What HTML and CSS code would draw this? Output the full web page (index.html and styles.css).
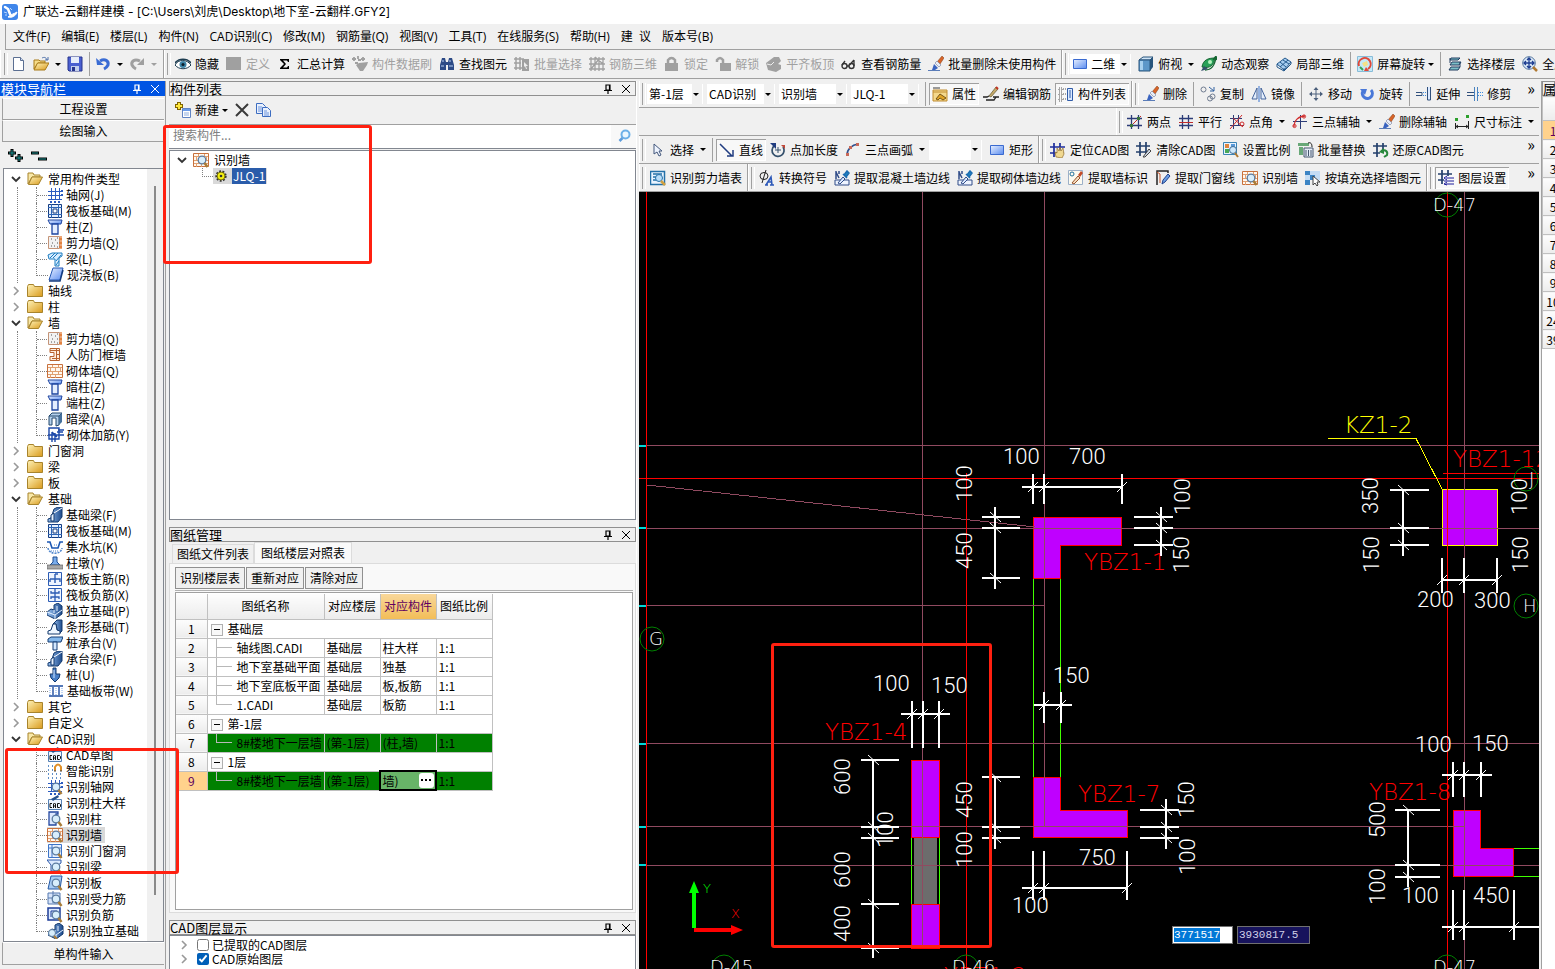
FILE: index.html
```html
<!DOCTYPE html>
<html lang="zh-CN">
<head>
    <meta charset="UTF-8">
    <meta name="viewport" content="width=device-width, initial-scale=1.0">
    <title>广联达-云翻样建模</title>
    <link rel="stylesheet" href="styles.css">
</head>
<body>
    <!-- 图标库 -->
    <svg class="sprite" aria-hidden="true">
        <defs>
            <linearGradient id="g-folder" x1="0" y1="0" x2="1" y2="1"><stop offset="0" stop-color="#fff3b8"/><stop offset="1" stop-color="#d99a1c"/></linearGradient>
            <linearGradient id="g-blue" x1="0" y1="0" x2="1" y2="1"><stop offset="0" stop-color="#e8f0ff"/><stop offset="1" stop-color="#5a8cf0"/></linearGradient>
            <linearGradient id="g-steel" x1="0" y1="0" x2="1" y2="0"><stop offset="0" stop-color="#9cc4f4"/><stop offset="1" stop-color="#1c4a8c"/></linearGradient>
        </defs>
        <symbol id="i-logo" viewBox="0 0 16 16"><rect width="16" height="16" rx="3" fill="#3f86ea"/><path d="M3 3l3 2 2 5" stroke="#fff" stroke-width="2.500" fill="none" stroke-linecap="round"/><path d="M6 13c4 1 8-1 9-5-3 2-6 2-9 5z" fill="#fff" stroke="#fff"/><path d="M2 8l3 1M3 11l2 0M8 4l2 2" stroke="#bcd9ff"/></symbol>
        <symbol id="i-new" viewBox="0 0 16 16"><path d="M2.500 1.500h7l3 3v10h-10z" fill="#fff" stroke="#5b6f92"/><path d="M9.500 1.500v3h3" fill="#cfdcf2" stroke="#5b6f92"/></symbol>
        <symbol id="i-open" viewBox="0 0 16 16"><path d="M1 13V4h5l1 1h5v2H5z" fill="#f6dc88" stroke="#a87a18"/><path d="M1 14l3.500-7H16l-4 7z" fill="url(#g-folder)" stroke="#a87a18"/><path d="M9 2c2-1 4-1 5 2M12 4h3V1" fill="none" stroke="#4c6fa8"/></symbol>
        <symbol id="i-save" viewBox="0 0 16 16"><path d="M1 1h14v14H2l-1-1z" fill="#4a5fd0" stroke="#26348c"/><path d="M4 1h8v6H4z" fill="#e6ecfa"/><path d="M4 10h8v5H4z" fill="#c4cfec"/><path d="M5 11h3v4H5z" fill="#26348c"/></symbol>
        <symbol id="i-undo" viewBox="0 0 16 16"><path d="M5 5c5-3 9 0 8 4-1 2-2 3-4 4" fill="none" stroke="#3a6cd4" stroke-width="3"/><path d="M1 2l8 7H2z" fill="#3a6cd4"/></symbol>
        <symbol id="i-redo" viewBox="0 0 16 16"><path d="M11 5C5 2 2 6 3 9c1 2 2 3 4 4" fill="none" stroke="#a0a0a0" stroke-width="3"/><path d="M15 2v7H8z" fill="#a0a0a0"/></symbol>
        <symbol id="i-eye" viewBox="0 0 16 16"><path d="M0 9c3-6 12-6 16 0-4 5-12 5-16 0z" fill="#fff" stroke="#1d3c50"/><path d="M0 7C4 2 12 2 16 7" fill="none" stroke="#1d3c50" stroke-width="1.500"/><circle cx="8" cy="8.500" r="3.500" fill="#3c83a6"/><circle cx="8" cy="8.500" r="1.500" fill="#0c1c28"/></symbol>
        <symbol id="i-block" viewBox="0 0 16 16"><path d="M0 1h15v13H0z" fill="#a0a0a0"/></symbol>
        <symbol id="i-sum" viewBox="0 0 16 16"><path d="M3 3h9v3h-1l-1-1.500H6l3 3.500-3 3.500h4l1-1.500h1v3H3v-1l4-4-4-4z" fill="#000"/></symbol>
        <symbol id="i-brushgray" viewBox="0 0 16 16"><path d="M4 9l3-2 9-1-1 3-4 6H8z" fill="#a0a0a0"/><path d="M0 3h4M2 1v4M6 0v3M6 4h3M11 1v4M9 3h4M3 7h3" stroke="#a0a0a0" stroke-width="1.800"/></symbol>
        <symbol id="i-find" viewBox="0 0 16 16"><path d="M3 2h3l1 4v8H1V9zM10 2h3l2 7v5H9V6z" fill="#2c4a86"/><path d="M6 6h4v3H6z" fill="#2c4a86"/><path d="M2 10h3M10 10h4M4 4v2M11 4v2" stroke="#b9d0f4"/></symbol>
        <symbol id="i-batchsel" viewBox="0 0 16 16"><path d="M2 1v13M6 1v13M0 3h10M0 7h7M0 12h8" stroke="#a0a0a0" stroke-width="1.500"/><path d="M8 3h7v12H8z" fill="#a0a0a0"/><path d="M10 6l4 4h-2l1 3h-1l-1-3-1 1z" fill="#eee"/></symbol>
        <symbol id="i-rebar3d" viewBox="0 0 16 16"><path d="M2 15V1M6 15V1M10 15V1M14 1v14M0 3h16M0 8h16M0 13h16M6 1l8 7M2 13l8-10" stroke="#a0a0a0" stroke-width="1.300" fill="none"/></symbol>
        <symbol id="i-lock" viewBox="0 0 16 16"><path d="M1 7h13v8H1z" fill="#a0a0a0"/><path d="M4 8V4q3.500-4 7 0v4" stroke="#a0a0a0" stroke-width="2.500" fill="none"/></symbol>
        <symbol id="i-unlock" viewBox="0 0 16 16"><path d="M5 7h11v8H5z" fill="#a0a0a0"/><path d="M8 8V4Q5 0 2 4v2" stroke="#a0a0a0" stroke-width="2.500" fill="none"/></symbol>
        <symbol id="i-flush" viewBox="0 0 16 16"><path d="M0 7l4-3 4-3h5l2 4-3 3 3 1v4l-5 3-8-2z" fill="#a0a0a0"/><path d="M1 8l4 1 3-3" stroke="#eee" fill="none"/></symbol>
        <symbol id="i-glass" viewBox="0 0 16 16"><circle cx="3.500" cy="10" r="2.500" fill="none" stroke="#333" stroke-width="1.400"/><circle cx="10.500" cy="10" r="2.500" fill="none" stroke="#333" stroke-width="1.400"/><path d="M1 9l3-4M8.500 9L13 4M13 10V4M6 10h2" stroke="#333" fill="none" stroke-width="1.300"/></symbol>
        <symbol id="i-brush" viewBox="0 0 16 16"><path d="M9 6l5-6 2 2-4 6z" fill="#d86428" stroke="#7c3a14" stroke-width=".5"/><path d="M7 7l2-2 4 4-2 2z" fill="#e8ecf6" stroke="#707c9c" stroke-width=".6"/><path d="M6 8l4 4-3 2H4z" fill="#3a64c0"/><path d="M0 14.500h12" stroke="#5a7cb8"/></symbol>
        <symbol id="i-rect" viewBox="0 0 16 16"><path d="M1.500 3.500h13v9h-13z" fill="url(#g-blue)" stroke="#3a6ad0"/></symbol>
        <symbol id="i-cube" viewBox="0 0 16 16"><path d="M1 4l4-3h10l-3 3z" fill="#cfe4f6" stroke="#28557c"/><path d="M1 4h11v11H1z" fill="#5d97c8" stroke="#28557c"/><path d="M12 4l3-3v10l-3 4z" fill="#28557c"/><path d="M2 5h3v9H2z" fill="#a8d0ee"/></symbol>
        <symbol id="i-orbit" viewBox="0 0 16 16"><path d="M1 11c1-7 6-9 13-9-1 7-5 11-13 9z" fill="#28a058" stroke="#146430"/><path d="M4 14c7 0 10-5 11-13M12 4l3-4 1 4" stroke="#146430" fill="none" stroke-width="1.300"/><path d="M0 15l3-5 4 3z" fill="#34506c"/><circle cx="9" cy="6" r="2" fill="#b4f0bc"/></symbol>
        <symbol id="i-part3d" viewBox="0 0 16 16"><path d="M1 8l8-6 6 4-7 8z" fill="#a6cdf0" stroke="#24598c"/><path d="M4 6l6 5M7 4l6 4M4 11l8-7M1 8v3l7 4v-3M8 15l7-7V6" stroke="#24598c" fill="none"/></symbol>
        <symbol id="i-screenrot" viewBox="0 0 16 16"><path d="M.5.5h15v15H.5z" fill="#c4e8f8" stroke="#88bcd8"/><path d="M2 10a6 6 0 1 1 9 3" fill="none" stroke="#e04838" stroke-width="2"/><path d="M5 7l5-2 1 4-4 2z" fill="#f4e088"/><path d="M12 15H7l2-4z" fill="#e04838"/><path d="M3 11l3 3" stroke="#38a058" stroke-width="2"/></symbol>
        <symbol id="i-floors" viewBox="0 0 16 16"><path d="M4 2h9l-2 2H3zM5 6h9l-2 3H3zM4 11h9l-2 3H2z" fill="#7cc0c8" stroke="#203c60"/><path d="M3 2v5M13 6v5" stroke="#203c60"/></symbol>
        <symbol id="i-fullscr" viewBox="0 0 16 16"><circle cx="7" cy="7" r="6.300" fill="#dceaf8" stroke="#50719c"/><path d="M7 2v10M2 7h10M5 4l2-2 2 2M5 10l2 2 2-2M4 5L2 7l2 2M10 5l2 2-2 2" stroke="#1c3c90" fill="none" stroke-width="1.300"/><path d="M11 11l4 4" stroke="#b07830" stroke-width="2.500"/></symbol>
        <symbol id="i-newcomp" viewBox="0 0 16 16"><path d="M4 0v8M0 4h8" stroke="#806400" stroke-width="4"/><path d="M4 1v6M1 4h6" stroke="#ffe83c" stroke-width="2"/><path d="M7.500 6.500h8v9h-8z" fill="#fff" stroke="#6084c4"/><path d="M8 7h7v2H8z" fill="#6a9be8"/><path d="M9 11h5M9 13h5" stroke="#8faede"/></symbol>
        <symbol id="i-x" viewBox="0 0 16 16"><path d="M2 2l12 12M14 2L2 14" stroke="#3a3a3a" stroke-width="2"/></symbol>
        <symbol id="i-copy" viewBox="0 0 16 16"><path d="M.5 1.500h6l3 3v7h-9z" fill="#eaf1fd" stroke="#3c6cc0"/><path d="M6.500 5.500h5l3 3v6h-8z" fill="#eaf1fd" stroke="#3c6cc0"/><path d="M2 5h4M2 7h4M2 9h4M8 9h3M8 11h5M8 13h5" stroke="#6c94dc"/></symbol>
        <symbol id="i-search" viewBox="0 0 16 16"><circle cx="9.500" cy="6.500" r="4" fill="#eaf6ff" stroke="#6cb0e8" stroke-width="2"/><path d="M6.500 10l-3 3" stroke="#5c9cdc" stroke-width="2.500"/></symbol>
        <symbol id="i-attr" viewBox="0 0 16 16"><path d="M1 1h7v2H1z" fill="#999"/><path d="M1 4h14v11H1z" fill="#f4d88c" stroke="#c08c30"/><path d="M1 6h14" stroke="#c08c30"/><path d="M4 13l4-5 6 4-3 2-3-2-2 2z" fill="#e0a428" stroke="#5c3c08" stroke-width=".8"/></symbol>
        <symbol id="i-editbar" viewBox="0 0 16 16"><path d="M0 11h4l2-1M10 11h6M3 14h8l2-3" stroke="#222" fill="none" stroke-width="1.300"/><path d="M6 10l7-9 2 2-7 8z" fill="#c4a868" stroke="#5c5430" stroke-width=".7"/><path d="M13 1l2 2" stroke="#c03020" stroke-width="2"/></symbol>
        <symbol id="i-complist" viewBox="0 0 16 16"><path d="M1 2h3v3H1zM1 7h3v3H1zM1 12h3v3H1zM5 3h3M5 8h3M5 13h3" fill="none" stroke="#555" stroke-dasharray="1 1"/><path d="M9.500 2.500h5v12h-5z" fill="#dceaff" stroke="#305ca8"/><path d="M11 5h2M11 7h2M11 9h2M11 11h2" stroke="#305ca8"/></symbol>
        <symbol id="i-dup" viewBox="0 0 16 16"><circle cx="3.500" cy="3.500" r="2.500" fill="none" stroke="#707c90"/><circle cx="12.500" cy="10.500" r="2.500" fill="none" stroke="#707c90"/><circle cx="10" cy="12.500" r="2.500" fill="none" stroke="#707c90"/><path d="M9 1l5 4M14 1v4h-4" stroke="#3060a0" fill="none"/></symbol>
        <symbol id="i-mirror" viewBox="0 0 16 16"><path d="M6 2v11H1zM10 2v11h5z" fill="#e4eefc" stroke="#44649c"/><path d="M8 0v16" stroke="#3a74d0"/></symbol>
        <symbol id="i-move" viewBox="0 0 16 16"><path d="M8 2v12M2 8h12" stroke="#4c607c"/><path d="M8 1l2.500 3h-5zM8 15l2.500-3h-5zM1 8l3-2.500v5zM15 8l-3-2.500v5z" fill="#4c607c"/></symbol>
        <symbol id="i-rotate" viewBox="0 0 16 16"><path d="M12 4a5 5 0 1 1-8 1" fill="none" stroke="#4a78d8" stroke-width="3"/><path d="M1 3h7L6 9z" fill="#4a78d8"/></symbol>
        <symbol id="i-extend" viewBox="0 0 16 16"><path d="M0 6.500h6v3H0" fill="none" stroke="#30507c"/><path d="M7 6.500h3M7 9.500h3" stroke="#3a8ce0" stroke-dasharray="1 1"/><path d="M11.500 1v13h3V1" fill="#dceaff" stroke="#30507c"/></symbol>
        <symbol id="i-trim" viewBox="0 0 16 16"><path d="M0 6.500h7M0 9.500h7" stroke="#30507c"/><path d="M11 6.500h5M11 9.500h5" stroke="#3a8ce0" stroke-dasharray="1 1"/><path d="M7.500 1v14M10.500 1v14" stroke="#4a84c0"/></symbol>
        <symbol id="i-axis2" viewBox="0 0 16 16"><path d="M4.500 1v14M11.500 1v14M0 4.500h15M0 11.500h15" stroke="#2c3c78" stroke-width="1.300"/><path d="M3 13L14 2" stroke="#c02c2c"/><path d="M3 10h3v3H3zM10 3h3v3h-3z" fill="#387438"/></symbol>
        <symbol id="i-parallel" viewBox="0 0 16 16"><path d="M4.500 1v14M10.500 1v14M1 4.500h14M1 11.500h14" stroke="#2c3c78" stroke-width="1.300"/><path d="M1 8.500h14" stroke="#c02c2c"/></symbol>
        <symbol id="i-angle" viewBox="0 0 16 16"><path d="M4.500 1v14M9.500 1v11M1 4.500h12M1 11.500h14" stroke="#2c3c78"/><path d="M1 15L13 1M4 4l10 9" stroke="#d02c2c"/><circle cx="13" cy="10" r="2" fill="none" stroke="#d02c2c"/></symbol>
        <symbol id="i-axis3" viewBox="0 0 16 16"><path d="M8.500 1v14M1 7.500h14" stroke="#2c3c78"/><path d="M2 13C2 6 7 2 13 2" fill="none" stroke="#d02c2c" stroke-width="1.300"/><circle cx="2.500" cy="12" r="1.600" fill="none" stroke="#d02c2c"/><circle cx="12" cy="2.500" r="1.600" fill="none" stroke="#d02c2c"/></symbol>
        <symbol id="i-dim" viewBox="0 0 16 16"><path d="M1 4h3v3H1zM12 1h3v3h-3z" fill="#2ca02c"/><path d="M1.500 9v6M14.500 7v8M2 12.500h12M4 11l-2 1.500L4 14M12 11l2 1.500-2 1.500" fill="none" stroke="#222"/></symbol>
        <symbol id="i-cursor" viewBox="0 0 16 16"><path d="M4 2v10l3-2 2 4 2-1-2-4h3z" fill="#eef4ff" stroke="#44587c"/></symbol>
        <symbol id="i-line" viewBox="0 0 16 16"><path d="M1 2l12 12M14 8v6H8" fill="none" stroke="#203c80" stroke-width="1.500"/></symbol>
        <symbol id="i-ptlen" viewBox="0 0 16 16"><path d="M4 4a6 6 0 1 0 9 1" fill="none" stroke="#34506c" stroke-width="1.700"/><path d="M0 1h6v6z" fill="#203c80"/><path d="M8 5v6M5 8h6" stroke="#34506c"/><path d="M11 3h4v4z" fill="#c04838"/></symbol>
        <symbol id="i-arc" viewBox="0 0 16 16"><path d="M2 13C2 7 7 3 13 2" fill="none" stroke="#30508c" stroke-width="1.500"/><path d="M1 11h3v3H1zM4 4h3v3H4zM11 1h3v3h-3z" fill="#c86858"/></symbol>
        <symbol id="i-grid" viewBox="0 0 16 16"><path d="M4 1v14M10 1v14M0 5h15M0 11h14" stroke="#1c2c9c" stroke-width="1.700"/></symbol>
        <symbol id="i-locate" viewBox="0 0 16 16"><use href="#i-grid"/><path d="M6 15l-1-5 2 1V6l2 3 1-4 1 4 2-3 1 6-2 4z" fill="#f0d890" stroke="#94702c" stroke-width=".7"/></symbol>
        <symbol id="i-clearcad" viewBox="0 0 16 16"><path d="M4 0v14M10 0v12M0 4h14M0 10h12" stroke="#24406c" stroke-width="1.700"/><path d="M7 15l6-8 2 2-6 6z" fill="#cdd6e4" stroke="#444"/></symbol>
        <symbol id="i-scale" viewBox="0 0 16 16"><path d="M.5.5h13v12H.5z" fill="#eaf4ff" stroke="#3c84b4"/><path d="M2 2h4v4H2z" fill="#e08440"/><path d="M2 7h4v4H2z" fill="#48a858"/><path d="M8 2h4v3H8z" fill="#5898d8"/><circle cx="10" cy="8" r="3.500" fill="#cfe8fa" stroke="#406c94"/><path d="M12 11l3 4" stroke="#b07830" stroke-width="2"/></symbol>
        <symbol id="i-replace" viewBox="0 0 16 16"><path d="M0 1h11v3H0zM1 5h4v8H1z" fill="#68a878"/><path d="M6 6h9v9H6z" fill="#e4ecf8" stroke="#44546c"/><path d="M8 8v6M10.500 8v6M13 8v6" stroke="#44546c"/><path d="M10 1c3-1 4 1 4 4" stroke="#222" fill="none"/></symbol>
        <symbol id="i-restore" viewBox="0 0 16 16"><path d="M4 1v14M10 1v9M0 4h14M0 11h7" stroke="#24406c" stroke-width="1.700"/><path d="M8 9c5-2 7 1 6 4l-3 2" fill="none" stroke="#28883c" stroke-width="2"/><path d="M6 10l5-4v6z" fill="#28883c"/></symbol>
        <symbol id="i-walltable" viewBox="0 0 16 16"><path d="M.5 1.500h14v13H.5z" fill="#eaf4ff" stroke="#2470a8" stroke-width="1.500"/><path d="M3 4h9M3 7h3M3 10h3" stroke="#2470a8" stroke-width="1.500"/><circle cx="9" cy="8" r="3.500" fill="#b8dcf8" stroke="#2470a8"/><path d="M11 11l4 4" stroke="#d0a040" stroke-width="2.500"/></symbol>
        <symbol id="i-symbol" viewBox="0 0 16 16"><ellipse cx="5" cy="6" rx="4" ry="3.500" fill="none" stroke="#222"/><path d="M7 0L3 13" stroke="#222"/><path d="M7 15l5-8 1 8M9 12h4M6 15h3M11 15h4" fill="none" stroke="#2c58b8" stroke-width="1.600"/></symbol>
        <symbol id="i-edge" viewBox="0 0 16 16"><path d="M1 10h14v5H1z" fill="#eef4ff" stroke="#304c88"/><path d="M2 1v8M2 2l3 6M5 1v3" fill="none" stroke="#304c88" stroke-width="1.500"/><path d="M4 13l5-6 2 2-5 5z" fill="#dceaff" stroke="#304c88"/><path d="M9 4l4 4M10 5l3-4 2 2-3 4z" stroke="#1c6cb0" fill="#2084c0" stroke-width="1.500"/></symbol>
        <symbol id="i-mark" viewBox="0 0 16 16"><path d="M.5.500h14v14H.5z" fill="#fdfaf0" stroke="#9cb0c8"/><circle cx="4" cy="4" r="2" fill="none" stroke="#20709c"/><path d="M4 13l6-7 2 2-6 6z" fill="#f4dcc0" stroke="#98542c"/><path d="M10 5l3-4 2 2-3 4z" fill="#c44c28"/></symbol>
        <symbol id="i-doorline" viewBox="0 0 16 16"><path d="M2 15V1h11v2" fill="none" stroke="#222" stroke-width="1.500"/><path d="M2 2l3 2v9" stroke="#c05028" fill="none"/><path d="M7 14l1-4 5-6 2 2-5 6z" fill="#6ca0e4" stroke="#20408c"/></symbol>
        <symbol id="i-bricks" viewBox="0 0 16 16"><path d="M.5 1.500h15v13H.5z" fill="#fff8f0" stroke="#c8703c"/><path d="M1 4.500h14M1 8.500h14M1 11.500h14M5.500 2v2.500M11.500 2v2.500M8.500 5v3M3.500 5v3M13.500 5v3M5.500 8v3.500M11.500 8v3.500M8.500 12v3M3.500 12v3" stroke="#e0a070"/></symbol>
        <symbol id="i-lens" viewBox="0 0 16 16"><circle cx="9" cy="8" r="3.800" fill="#d8eefc" stroke="#5c7ca0" stroke-width="1.300"/><path d="M11.500 11l3 4" stroke="#a87c38" stroke-width="2.500"/></symbol>
        <symbol id="i-recwall" viewBox="0 0 16 16"><use href="#i-bricks"/><use href="#i-lens"/></symbol>
        <symbol id="i-fillsel" viewBox="0 0 16 16"><path d="M0 1h5v4H0zM5 5h5v5H5zM0 10h5v5H0z" fill="#3c84c4"/><path d="M5 1h10v4H5zM0 5h5v5H0zM10 5h5v5h-5z" fill="#c4dcf4"/><path d="M8 6v9l2-2 2 3 1-1-1-3h3z" fill="#fff" stroke="#444"/></symbol>
        <symbol id="i-layer" viewBox="0 0 16 16"><path d="M4 0v14M10 0v6M0 4h14M0 10h6" stroke="#24406c" stroke-width="1.700"/><path d="M8 8h8M6 11h10M8 14h8M9 6L6 8l3 2M9 12l-3 2 3 1" stroke="#1c1c9c" fill="none"/></symbol>
        <symbol id="i-folder" viewBox="0 0 16 16"><path d="M.5 3.500l1-2h5l1 2h8v10H.5z" fill="url(#g-folder)" stroke="#a8842c"/></symbol>
        <symbol id="i-folderopen" viewBox="0 0 16 16"><path d="M1 13V2h5l1 2h6v2H5z" fill="#f8e8a8" stroke="#a8842c"/><path d="M1.500 13.500L5 6h10.500l-4 7.500z" fill="url(#g-folder)" stroke="#a8842c"/></symbol>
        <symbol id="i-down" viewBox="0 0 10 10"><path d="M1 3l4 4 4-4" fill="none" stroke="#333" stroke-width="1.800"/></symbol>
        <symbol id="i-right" viewBox="0 0 10 10"><path d="M3 1l4 4-4 4" fill="none" stroke="#999" stroke-width="1.600"/></symbol>
        <symbol id="i-axnet" viewBox="0 0 16 16"><path d="M4.500 1v12M8.500 1v12M12.500 1v12M1 4.500h14M1 8.500h14M1 12.500h14" stroke="#2c5cc0"/><path d="M14 3h2v2h-2zM14 7h2v2h-2zM3 14h2v2H3zM7 14h2v2H7zM11 14h2v2h-2z" fill="#2c5cc0"/></symbol>
        <symbol id="i-raft" viewBox="0 0 16 16"><path d="M1.500 1.500h13v13h-13z" fill="#e6f0ff" stroke="#143c80"/><path d="M4.500 1v14M11.500 1v14M1 4.500h14M1 11.500h14" stroke="#2c64b4"/><path d="M6 6h4v4H6z" fill="#fff" stroke="#143c80"/></symbol>
        <symbol id="i-col" viewBox="0 0 16 16"><path d="M1 1h14l-1 4H3z" fill="url(#g-blue)" stroke="#1c44a0"/><path d="M5 5h6v10H5z" fill="#e4eeff" stroke="#1c44a0" stroke-width="1.300"/></symbol>
        <symbol id="i-shear" viewBox="0 0 16 16"><path d="M1.500 1.500h11v12h-11z" fill="#f2f2f2" stroke="#c49478"/><path d="M4 4h1M8 5h1M5 8h1M10 8h1M7 11h1M4 11h1M10 12h1M10 3h1" stroke="#555"/><path d="M14 1v13M12 4h3M12 8h3M12 12h3" stroke="#e07830" stroke-width="1.300"/></symbol>
        <symbol id="i-beam" viewBox="0 0 16 16"><path d="M1 4l4-2h10v3l-3 2v8H8V8L2 8z" fill="#d6ecff" stroke="#1c7cc0"/><path d="M3 7l5-5M6 7l5-5M9 10l5-6M9 14l3-4" stroke="#1c7cc0"/></symbol>
        <symbol id="i-slab" viewBox="0 0 16 16"><path d="M5 1h10l-3 12H1z" fill="url(#g-blue)" stroke="#2458b4"/><path d="M1 14h11l3-11" fill="none" stroke="#143c80" stroke-width="1.500"/></symbol>
        <symbol id="i-frame" viewBox="0 0 16 16"><path d="M3 1.500h9.500v12H3v-4h4v-4H3z" fill="#fff0e0" stroke="#b86430"/><path d="M9.500 2v11M3 3.500h9M9 7.500h3M5 11.500h7" stroke="#b86430"/></symbol>
        <symbol id="i-hbeam" viewBox="0 0 16 16"><path d="M2 5l3-3h10l-3 3v9l-3 1V7H5v7H2z" fill="#b4d0ec" stroke="#24486c"/><path d="M2 5h10" fill="none" stroke="#24486c"/><path d="M12 5l3-3v9l-3 3z" fill="#44709c"/></symbol>
        <symbol id="i-brickbar" viewBox="0 0 16 16"><path d="M1 1h10v11H1zM4 5v10M7 6v9M4 5l5 5M0 8h16M10 3h6M9 5h6" fill="none" stroke="#1c48a8" stroke-width="1.400"/></symbol>
        <symbol id="i-fbeam" viewBox="0 0 16 16"><path d="M1 15v-3l3-1 3-9 4-2h4v10l-4 5z" fill="url(#g-steel)" stroke="#12386c"/><path d="M4 14V8l3-2v8z" fill="#e8f2ff" stroke="#12386c"/><path d="M7 6l8-5" stroke="#fff"/></symbol>
        <symbol id="i-pit" viewBox="0 0 16 16"><path d="M0 3h3l2 6h6l2-6h3" fill="none" stroke="#1c58b4" stroke-width="1.600"/><path d="M1 9c1 7 13 7 14 0" fill="none" stroke="#4c84cc" stroke-width="1.500" stroke-dasharray="2 1"/><path d="M4 12h8M7 6h3" stroke="#4c84cc" stroke-dasharray="1 1"/></symbol>
        <symbol id="i-pier" viewBox="0 0 16 16"><path d="M6 2h4v5l3 3H3l3-3z" fill="#78acec" stroke="#1c4c90"/><path d="M0 10h16v4H0z" fill="#a8a8a8" stroke="#666" stroke-width=".7"/></symbol>
        <symbol id="i-mainbar" viewBox="0 0 16 16"><path d="M1.500 1.500h13v13h-13z" fill="#edf4ff" stroke="#2c5cb4"/><path d="M8 3v9M3 8h10v3M8 3h3M3 8v3" fill="none" stroke="#2c5cb4" stroke-width="1.400"/></symbol>
        <symbol id="i-negbar" viewBox="0 0 16 16"><path d="M1.500 1.500h13v13h-13z" fill="#edf4ff" stroke="#2c5cb4"/><path d="M8 1v14M4 4v2h8V4M4 12v-2h8v2" fill="none" stroke="#2c5cb4" stroke-width="1.300"/></symbol>
        <symbol id="i-found" viewBox="0 0 16 16"><path d="M0 9l4-3 3 1V2l4-2 4 3v8l-7 5-8-4z" fill="url(#g-steel)" stroke="#12386c"/><path d="M0 9l8 3v4M8 12l7-5M7 7v3M10 3v5" stroke="#e4f0ff" fill="none"/></symbol>
        <symbol id="i-strip" viewBox="0 0 16 16"><path d="M6 5l4-4h5v11l-2 2-3-3-1-6z" fill="url(#g-steel)" stroke="#12386c"/><path d="M1 15v-3l3-1 2-6h3l1 6 3 1v3z" fill="#eef6ff" stroke="#12386c"/></symbol>
        <symbol id="i-cap" viewBox="0 0 16 16"><path d="M1 4l3-2h12l-2 5H1z" fill="#84b8ec" stroke="#143c74"/><path d="M6 7h4v8H6z" fill="#d4e8ff" stroke="#143c74"/></symbol>
        <symbol id="i-pile" viewBox="0 0 16 16"><path d="M6 1h3v6h4l-1 4-4 4-4-4-1-4h3z" fill="#4880c8" stroke="#12386c"/><path d="M7 3v8" stroke="#d4e8ff"/></symbol>
        <symbol id="i-band" viewBox="0 0 16 16"><path d="M1 3h14M1 13h14" stroke="#1c4ca0" stroke-width="1.600"/><path d="M5 4v8M11 4v8" stroke="#1c4ca0" stroke-width="1.400"/><path d="M2 5v7M8 5v7M14 5v7" stroke="#7ca8e4" stroke-dasharray="1 1"/></symbol>
        <symbol id="i-cad" viewBox="0 0 16 16"><path d="M1.500 4.500h13v10h-13z" fill="#edf4ff" stroke="#5480b4"/><path d="M4 4l7-4 1 2-6 4z" fill="#24508c"/><path d="M5 8.500H3v4h2M6.500 13V9l1-1 1 1v4M6.500 11h2M10.500 8.500v4h2l1-1v-2l-1-1z" fill="none" stroke="#111"/></symbol>
        <symbol id="i-smart" viewBox="0 0 16 16"><path d="M1 3h5M1 7h5M1 11h13M1 15h13" stroke="#2c6cb8" stroke-width="1.500" stroke-dasharray="1 3"/><path d="M8 8V4q3-5 6 0v4" fill="none" stroke="#e09028" stroke-width="2"/><path d="M7 8h2M13 8h2" stroke="#444"/></symbol>
        <symbol id="i-recaxis" viewBox="0 0 16 16"><use href="#i-axnet"/><use href="#i-lens"/></symbol>
        <symbol id="i-reccol" viewBox="0 0 16 16"><path d="M2 1h9v2h-2v11H2z" fill="#dce8ff" stroke="#2448a0" stroke-width="1.300"/><use href="#i-lens"/></symbol>
        <symbol id="i-recdoor" viewBox="0 0 16 16"><path d="M1.500 1.500h13v13h-13zM5 1v14M1 5h14" fill="#e6f0ff" stroke="#3c74c8"/><use href="#i-lens"/></symbol>
        <symbol id="i-recbeam" viewBox="0 0 16 16"><path d="M0 1h14v3l-3 2v6H4V6z" fill="#dceaff" stroke="#2c58a8"/><use href="#i-lens"/></symbol>
        <symbol id="i-recslab" viewBox="0 0 16 16"><path d="M4 1h11l-2 13H1z" fill="#a8ccf4" stroke="#2458a4"/><use href="#i-lens"/></symbol>
        <symbol id="i-recbar" viewBox="0 0 16 16"><path d="M1 2h12v11H1zM6 0v12M1 7h12" fill="#d6e4fa" stroke="#5478b0"/><use href="#i-lens"/></symbol>
        <symbol id="i-recneg" viewBox="0 0 16 16"><path d="M1 1h12v12H1z" fill="#dceaff" stroke="#1c3c98" stroke-width="1.500"/><path d="M4 10V4h6v5M7 4v6" fill="none" stroke="#1c3c98"/><use href="#i-lens"/></symbol>
        <symbol id="i-recfound" viewBox="0 0 16 16"><use href="#i-found"/><circle cx="4" cy="10" r="3.500" fill="#d8eefc" stroke="#5c7ca0"/><path d="M6 13l3 3" stroke="#a87c38" stroke-width="2"/></symbol>
        <symbol id="i-gear" viewBox="0 0 16 16"><circle cx="8" cy="8" r="5" fill="none" stroke="#333" stroke-width="3" stroke-dasharray="2 1.500"/><circle cx="8" cy="8" r="4.500" fill="#f4f010" stroke="#666000"/><circle cx="8" cy="8" r="1.500" fill="#333"/></symbol>
        <symbol id="i-pin" viewBox="0 0 10 10"><path d="M3 1h4v5H3zM6.500 1v5M1 6.500h8M5 7v3" fill="none" stroke="currentColor" stroke-width="1.200"/></symbol>
        <symbol id="i-close" viewBox="0 0 10 10"><path d="M1 1l8 8M9 1L1 9" stroke="currentColor"/></symbol>
    </svg>

    <header class="titlebar">
        <svg class="ico"><use href="#i-logo"/></svg>
        <span>广联达-云翻样建模 - [C:\Users\刘虎\Desktop\地下室-云翻样.GFY2]</span>
    </header>

    <nav class="menubar">
        <button>文件(F)</button>
        <button>编辑(E)</button>
        <button>楼层(L)</button>
        <button>构件(N)</button>
        <button>CAD识别(C)</button>
        <button>修改(M)</button>
        <button>钢筋量(Q)</button>
        <button>视图(V)</button>
        <button>工具(T)</button>
        <button>在线服务(S)</button>
        <button>帮助(H)</button>
        <button>建&nbsp; 议</button>
        <button>版本号(B)</button>
    </nav>

    <!-- 主工具栏 -->
    <div class="toolrow main">
        <div class="toolbar file">
            <button class="tbtn" aria-label="新建工程"><svg class="ico"><use href="#i-new"/></svg></button>
            <button class="tbtn drop" aria-label="打开"><svg class="ico"><use href="#i-open"/></svg></button>
            <button class="tbtn" aria-label="保存"><svg class="ico"><use href="#i-save"/></svg></button>
            <i class="sep"></i>
            <button class="tbtn drop" aria-label="撤销"><svg class="ico"><use href="#i-undo"/></svg></button>
            <button class="tbtn drop off" aria-label="恢复"><svg class="ico"><use href="#i-redo"/></svg></button>
        </div>
        <div class="toolbar">
            <button class="tbtn"><svg class="ico"><use href="#i-eye"/></svg>隐藏</button>
            <button class="tbtn off" disabled><svg class="ico"><use href="#i-block"/></svg>定义</button>
            <button class="tbtn"><svg class="ico"><use href="#i-sum"/></svg>汇总计算</button>
            <button class="tbtn off" disabled><svg class="ico"><use href="#i-brushgray"/></svg>构件数据刷</button>
            <button class="tbtn"><svg class="ico"><use href="#i-find"/></svg>查找图元</button>
            <button class="tbtn off" disabled><svg class="ico"><use href="#i-batchsel"/></svg>批量选择</button>
            <button class="tbtn off" disabled><svg class="ico"><use href="#i-rebar3d"/></svg>钢筋三维</button>
            <button class="tbtn off" disabled><svg class="ico"><use href="#i-lock"/></svg>锁定</button>
            <button class="tbtn off" disabled><svg class="ico"><use href="#i-unlock"/></svg>解锁</button>
            <button class="tbtn off" disabled><svg class="ico"><use href="#i-flush"/></svg>平齐板顶</button>
            <button class="tbtn"><svg class="ico"><use href="#i-glass"/></svg>查看钢筋量</button>
            <button class="tbtn"><svg class="ico"><use href="#i-brush"/></svg>批量删除未使用构件</button>
        </div>
        <div class="toolbar">
            <label class="combo view"><svg class="ico"><use href="#i-rect"/></svg><select aria-label="视图模式"><option>二维</option><option>三维</option></select></label>
            <button class="tbtn drop"><svg class="ico"><use href="#i-cube"/></svg>俯视</button>
            <button class="tbtn"><svg class="ico"><use href="#i-orbit"/></svg>动态观察</button>
            <button class="tbtn"><svg class="ico"><use href="#i-part3d"/></svg>局部三维</button>
            <i class="sep"></i>
            <button class="tbtn drop tight"><svg class="ico"><use href="#i-screenrot"/></svg>屏幕旋转</button>
            <i class="sep"></i>
            <button class="tbtn"><svg class="ico"><use href="#i-floors"/></svg>选择楼层</button>
            <button class="tbtn"><svg class="ico"><use href="#i-fullscr"/></svg>全屏</button>
        </div>
    </div>

    <main class="workspace">
        <!-- 模块导航栏 -->
        <aside class="module-nav">
            <div class="panel-title active"><span>模块导航栏</span><button aria-label="固定"><svg><use href="#i-pin"/></svg></button><button aria-label="关闭"><svg><use href="#i-close"/></svg></button></div>
            <button class="nav-section first">工程设置</button>
            <button class="nav-section">绘图输入</button>
            <div class="nav-tools">
                <svg width="42" height="16" aria-hidden="true"><path d="M4 0v8M0 4h8M11 5v8M7 9h8" stroke="#000" stroke-width="3"/><path d="M4 1v6M1 4h6M11 6v6M8 9h6" stroke="#1c9494"/><path d="M23 4h8M30 10h9" stroke="#000" stroke-width="3"/><path d="M24 4h6M31 10h7" stroke="#1c9494"/></svg>
            </div>
            <div class="nav-tree">
                <ul class="tree">
                    <li><div class="node"><svg class="arrow"><use href="#i-down"/></svg><svg class="ico"><use href="#i-folderopen"/></svg>常用构件类型</div>
                        <ul>
                            <li><svg class="ico"><use href="#i-axnet"/></svg><span>轴网(J)</span></li>
                            <li><svg class="ico"><use href="#i-raft"/></svg><span>筏板基础(M)</span></li>
                            <li><svg class="ico"><use href="#i-col"/></svg><span>柱(Z)</span></li>
                            <li><svg class="ico"><use href="#i-shear"/></svg><span>剪力墙(Q)</span></li>
                            <li><svg class="ico"><use href="#i-beam"/></svg><span>梁(L)</span></li>
                            <li><svg class="ico"><use href="#i-slab"/></svg><span>现浇板(B)</span></li>
                        </ul>
                    </li>
                    <li><div class="node"><svg class="arrow"><use href="#i-right"/></svg><svg class="ico"><use href="#i-folder"/></svg>轴线</div></li>
                    <li><div class="node"><svg class="arrow"><use href="#i-right"/></svg><svg class="ico"><use href="#i-folder"/></svg>柱</div></li>
                    <li><div class="node"><svg class="arrow"><use href="#i-down"/></svg><svg class="ico"><use href="#i-folderopen"/></svg>墙</div>
                        <ul>
                            <li><svg class="ico"><use href="#i-shear"/></svg><span>剪力墙(Q)</span></li>
                            <li><svg class="ico"><use href="#i-frame"/></svg><span>人防门框墙</span></li>
                            <li><svg class="ico"><use href="#i-bricks"/></svg><span>砌体墙(Q)</span></li>
                            <li><svg class="ico"><use href="#i-col"/></svg><span>暗柱(Z)</span></li>
                            <li><svg class="ico"><use href="#i-col"/></svg><span>端柱(Z)</span></li>
                            <li><svg class="ico"><use href="#i-hbeam"/></svg><span>暗梁(A)</span></li>
                            <li><svg class="ico"><use href="#i-brickbar"/></svg><span>砌体加筋(Y)</span></li>
                        </ul>
                    </li>
                    <li><div class="node"><svg class="arrow"><use href="#i-right"/></svg><svg class="ico"><use href="#i-folder"/></svg>门窗洞</div></li>
                    <li><div class="node"><svg class="arrow"><use href="#i-right"/></svg><svg class="ico"><use href="#i-folder"/></svg>梁</div></li>
                    <li><div class="node"><svg class="arrow"><use href="#i-right"/></svg><svg class="ico"><use href="#i-folder"/></svg>板</div></li>
                    <li><div class="node"><svg class="arrow"><use href="#i-down"/></svg><svg class="ico"><use href="#i-folderopen"/></svg>基础</div>
                        <ul>
                            <li><svg class="ico"><use href="#i-fbeam"/></svg><span>基础梁(F)</span></li>
                            <li><svg class="ico"><use href="#i-raft"/></svg><span>筏板基础(M)</span></li>
                            <li><svg class="ico"><use href="#i-pit"/></svg><span>集水坑(K)</span></li>
                            <li><svg class="ico"><use href="#i-pier"/></svg><span>柱墩(Y)</span></li>
                            <li><svg class="ico"><use href="#i-mainbar"/></svg><span>筏板主筋(R)</span></li>
                            <li><svg class="ico"><use href="#i-negbar"/></svg><span>筏板负筋(X)</span></li>
                            <li><svg class="ico"><use href="#i-found"/></svg><span>独立基础(P)</span></li>
                            <li><svg class="ico"><use href="#i-strip"/></svg><span>条形基础(T)</span></li>
                            <li><svg class="ico"><use href="#i-cap"/></svg><span>桩承台(V)</span></li>
                            <li><svg class="ico"><use href="#i-fbeam"/></svg><span>承台梁(F)</span></li>
                            <li><svg class="ico"><use href="#i-pile"/></svg><span>桩(U)</span></li>
                            <li><svg class="ico"><use href="#i-band"/></svg><span>基础板带(W)</span></li>
                        </ul>
                    </li>
                    <li><div class="node"><svg class="arrow"><use href="#i-right"/></svg><svg class="ico"><use href="#i-folder"/></svg>其它</div></li>
                    <li><div class="node"><svg class="arrow"><use href="#i-right"/></svg><svg class="ico"><use href="#i-folder"/></svg>自定义</div></li>
                    <li><div class="node"><svg class="arrow"><use href="#i-down"/></svg><svg class="ico"><use href="#i-folderopen"/></svg>CAD识别</div>
                        <ul>
                            <li><svg class="ico"><use href="#i-cad"/></svg><span>CAD草图</span></li>
                            <li><svg class="ico"><use href="#i-smart"/></svg><span>智能识别</span></li>
                            <li><svg class="ico"><use href="#i-recaxis"/></svg><span>识别轴网</span></li>
                            <li><svg class="ico"><use href="#i-cad"/></svg><span>识别柱大样</span></li>
                            <li><svg class="ico"><use href="#i-reccol"/></svg><span>识别柱</span></li>
                            <li class="current"><svg class="ico"><use href="#i-recwall"/></svg><span>识别墙</span></li>
                            <li><svg class="ico"><use href="#i-recdoor"/></svg><span>识别门窗洞</span></li>
                            <li><svg class="ico"><use href="#i-recbeam"/></svg><span>识别梁</span></li>
                            <li><svg class="ico"><use href="#i-recslab"/></svg><span>识别板</span></li>
                            <li><svg class="ico"><use href="#i-recbar"/></svg><span>识别受力筋</span></li>
                            <li><svg class="ico"><use href="#i-recneg"/></svg><span>识别负筋</span></li>
                            <li><svg class="ico"><use href="#i-recfound"/></svg><span>识别独立基础</span></li>
                        </ul>
                    </li>
                </ul>
                <div class="scrollbar"><i></i></div>
            </div>
            <button class="nav-section">单构件输入</button>
        </aside>

        <div class="panels">
            <!-- 构件列表 -->
            <section class="panel">
                <div class="panel-title"><span>构件列表</span><button aria-label="固定"><svg><use href="#i-pin"/></svg></button><button aria-label="关闭"><svg><use href="#i-close"/></svg></button></div>
                <div class="list-tools">
                    <button class="tbtn drop tight"><svg class="ico"><use href="#i-newcomp"/></svg>新建</button>
                    <button class="tbtn" aria-label="删除"><svg class="ico"><use href="#i-x"/></svg></button>
                    <button class="tbtn" aria-label="复制"><svg class="ico"><use href="#i-copy"/></svg></button>
                </div>
                <div class="search">
                    <input type="text" placeholder="搜索构件..." aria-label="搜索构件">
                    <button aria-label="搜索"><svg class="ico"><use href="#i-search"/></svg></button>
                </div>
                <div class="comp-tree">
                    <div class="node"><svg class="arrow"><use href="#i-down"/></svg><svg class="ico"><use href="#i-recwall"/></svg>识别墙</div>
                    <div class="leaf"><span class="leaf-box"><svg class="ico"><use href="#i-gear"/></svg><b>JLQ-1</b></span></div>
                </div>
            </section>

            <!-- 图纸管理 -->
            <section class="panel">
                <div class="panel-title"><span>图纸管理</span><button aria-label="固定"><svg><use href="#i-pin"/></svg></button><button aria-label="关闭"><svg><use href="#i-close"/></svg></button></div>
                <div class="tabs">
                    <button>图纸文件列表</button>
                    <button class="on">图纸楼层对照表</button>
                </div>
                <div class="tab-body">
                    <div class="map-tools">
                        <button>识别楼层表</button>
                        <button>重新对应</button>
                        <button>清除对应</button>
                    </div>
                    <div class="map-wrap">
                        <table class="map">
                            <colgroup><col class="c-no"><col class="c-name"><col class="c-cell"><col class="c-cell"><col class="c-cell"></colgroup>
                            <thead>
                                <tr><th></th><th>图纸名称</th><th>对应楼层</th><th class="hot">对应构件</th><th>图纸比例</th></tr>
                            </thead>
                            <tbody>
                                <tr><th>1</th><td colspan="4"><i class="fold"></i>基础层</td></tr>
                                <tr><th>2</th><td><i class="branch"></i>轴线图.CADI</td><td>基础层</td><td>柱大样</td><td>1:1</td></tr>
                                <tr><th>3</th><td><i class="branch"></i>地下室基础平面</td><td>基础层</td><td>独基</td><td>1:1</td></tr>
                                <tr><th>4</th><td><i class="branch"></i>地下室底板平面</td><td>基础层</td><td>板,板筋</td><td>1:1</td></tr>
                                <tr><th>5</th><td><i class="branch end"></i>1.CADI</td><td>基础层</td><td>板筋</td><td>1:1</td></tr>
                                <tr><th>6</th><td colspan="4"><i class="fold"></i>第-1层</td></tr>
                                <tr class="green"><th>7</th><td><i class="branch end"></i>8#楼地下一层墙</td><td>(第-1层)</td><td>(柱,墙)</td><td>1:1</td></tr>
                                <tr><th>8</th><td colspan="4"><i class="fold"></i>1层</td></tr>
                                <tr class="green"><th class="cur">9</th><td><i class="branch end"></i>8#楼地下一层墙</td><td>(第-1层)</td><td class="editing"><div>墙)<button aria-label="选择构件"><svg width="11" height="3"><path d="M0 0h2v2H0zM4 0h2v2H4zM8 0h2v2H8z"/></svg></button></div></td><td>1:1</td></tr>
                            </tbody>
                        </table>
                    </div>
                </div>
            </section>

            <!-- CAD图层显示 -->
            <section class="panel">
                <div class="panel-title"><span>CAD图层显示</span><button aria-label="固定"><svg><use href="#i-pin"/></svg></button><button aria-label="关闭"><svg><use href="#i-close"/></svg></button></div>
                <div class="layers">
                    <label><svg class="arrow"><use href="#i-right"/></svg><input type="checkbox">已提取的CAD图层</label>
                    <label><svg class="arrow"><use href="#i-right"/></svg><input type="checkbox" checked>CAD原始图层</label>
                </div>
            </section>
        </div>

        <!-- 绘图区 -->
        <div class="drawing">
            <div class="toolrow first">
                <div class="toolbar combos">
                    <label class="combo w1"><select aria-label="楼层"><option>第-1层</option></select></label>
                    <label class="combo w2"><select aria-label="构件分类"><option>CAD识别</option></select></label>
                    <label class="combo w2"><select aria-label="构件类型"><option>识别墙</option></select></label>
                    <label class="combo w2"><select aria-label="构件名称"><option>JLQ-1</option></select></label>
                    <i class="sep"></i>
                    <button class="tbtn on"><svg class="ico"><use href="#i-attr"/></svg>属性</button>
                    <button class="tbtn"><svg class="ico"><use href="#i-editbar"/></svg>编辑钢筋</button>
                    <button class="tbtn on"><svg class="ico"><use href="#i-complist"/></svg>构件列表</button>
                </div>
                <div class="toolbar">
                    <button class="tbtn"><svg class="ico"><use href="#i-brush"/></svg>删除</button>
                    <i class="sep"></i>
                    <button class="tbtn"><svg class="ico"><use href="#i-dup"/></svg>复制</button>
                    <button class="tbtn"><svg class="ico"><use href="#i-mirror"/></svg>镜像</button>
                    <i class="sep"></i>
                    <button class="tbtn"><svg class="ico"><use href="#i-move"/></svg>移动</button>
                    <button class="tbtn"><svg class="ico"><use href="#i-rotate"/></svg>旋转</button>
                    <i class="sep"></i>
                    <button class="tbtn"><svg class="ico"><use href="#i-extend"/></svg>延伸</button>
                    <button class="tbtn"><svg class="ico"><use href="#i-trim"/></svg>修剪</button>
                </div>
                <button class="more" aria-label="更多">»</button>
            </div>
            <div class="toolrow right">
                <div class="toolbar">
                    <button class="tbtn"><svg class="ico"><use href="#i-axis2"/></svg>两点</button>
                    <button class="tbtn"><svg class="ico"><use href="#i-parallel"/></svg>平行</button>
                    <button class="tbtn drop"><svg class="ico"><use href="#i-angle"/></svg>点角</button>
                    <button class="tbtn drop"><svg class="ico"><use href="#i-axis3"/></svg>三点辅轴</button>
                    <button class="tbtn"><svg class="ico"><use href="#i-brush"/></svg>删除辅轴</button>
                    <button class="tbtn drop"><svg class="ico"><use href="#i-dim"/></svg>尺寸标注</button>
                </div>
            </div>
            <div class="toolrow">
                <div class="toolbar">
                    <button class="tbtn drop"><svg class="ico"><use href="#i-cursor"/></svg>选择</button>
                    <i class="sep"></i>
                    <button class="tbtn on"><svg class="ico"><use href="#i-line"/></svg>直线</button>
                    <button class="tbtn"><svg class="ico"><use href="#i-ptlen"/></svg>点加长度</button>
                    <button class="tbtn drop"><svg class="ico"><use href="#i-arc"/></svg>三点画弧</button>
                    <label class="combo arc"><select aria-label="画弧方式"><option></option></select></label>
                    <button class="tbtn"><svg class="ico"><use href="#i-rect"/></svg>矩形</button>
                </div>
                <div class="toolbar">
                    <button class="tbtn"><svg class="ico"><use href="#i-locate"/></svg>定位CAD图</button>
                    <button class="tbtn"><svg class="ico"><use href="#i-clearcad"/></svg>清除CAD图</button>
                    <button class="tbtn"><svg class="ico"><use href="#i-scale"/></svg>设置比例</button>
                    <button class="tbtn"><svg class="ico"><use href="#i-replace"/></svg>批量替换</button>
                    <button class="tbtn"><svg class="ico"><use href="#i-restore"/></svg>还原CAD图元</button>
                </div>
                <button class="more" aria-label="更多">»</button>
            </div>
            <div class="toolrow">
                <div class="toolbar">
                    <button class="tbtn"><svg class="ico"><use href="#i-walltable"/></svg>识别剪力墙表</button>
                </div>
                <div class="toolbar">
                    <button class="tbtn"><svg class="ico"><use href="#i-symbol"/></svg>转换符号</button>
                    <button class="tbtn"><svg class="ico"><use href="#i-edge"/></svg>提取混凝土墙边线</button>
                    <button class="tbtn"><svg class="ico"><use href="#i-edge"/></svg>提取砌体墙边线</button>
                    <button class="tbtn"><svg class="ico"><use href="#i-mark"/></svg>提取墙标识</button>
                    <button class="tbtn"><svg class="ico"><use href="#i-doorline"/></svg>提取门窗线</button>
                    <button class="tbtn"><svg class="ico"><use href="#i-recwall"/></svg>识别墙</button>
                    <button class="tbtn"><svg class="ico"><use href="#i-fillsel"/></svg>按填充选择墙图元</button>
                </div>
                <div class="toolbar">
                    <button class="tbtn on"><svg class="ico"><use href="#i-layer"/></svg>图层设置</button>
                </div>
                <button class="more" aria-label="更多">»</button>
            </div>

            <div class="canvas">
                <svg class="cad" role="img" aria-label="CAD图纸">
                    <defs>
                        <marker id="slash" markerUnits="userSpaceOnUse" markerWidth="12" markerHeight="12" refX="6" refY="6"><path d="M1 11L11 1" stroke="#fff"/></marker>
                        <marker id="back" markerUnits="userSpaceOnUse" markerWidth="12" markerHeight="12" refX="6" refY="6"><path d="M1 1L12 11" stroke="#fff"/></marker>
                    </defs>
                    <g transform="translate(-639 -192)">
                        <!-- 构件 -->
                        <g class="solid">
                            <path d="M911.500 760.500h28v77h-28zM911.500 904.500h28v44h-28z"/>
                            <path d="M1033.500 517.500h88v28h-61v33h-27z"/>
                            <path d="M1033.500 777.500h27v33h67v27h-94z"/>
                            <path d="M1453.500 810.500h27v38h33v28h-60z"/>
                            <path class="kz" d="M1442.500 489.500h55v56h-55z"/>
                        </g>
                        <path d="M914 838h23v66h-23z" fill="#6c6c6c"/>
                        <path class="ln green" d="M911.500 838v66M939.500 838v66M1033.500 579v198M1060.500 579v198M1514 848.500h25M1514 876.500h25"/>
                        <!-- 轴线 -->
                        <path class="ln axis" d="M647 445.500H1539M647 528.500H1539M647 605.500H1044M647 743.500H1539M647 826.500H1464M647 865.500H1539M922.500 192V948M1044.500 192V826M1464.500 192V969M647 485L1035 527"/>
                        <path class="ln red" d="M646.500 192V969M639 478.500H1539M966.500 473V969M1447.500 192V969M1443 473.500H1539"/>
                        <path class="ln cyan" d="M639 446h7M639 528h7M639 606h7M639 744h7M639 827h7M639 865h7"/>
                        <path class="ln yellow" d="M1328 438.500H1416L1442 489"/>
                        <!-- 轴号 -->
                        <g class="bubble">
                            <circle cx="652" cy="639" r="12"/><circle cx="1526" cy="479" r="12"/><circle cx="1526" cy="606" r="12"/><circle cx="1447" cy="205" r="12"/>
                            <circle cx="724" cy="967" r="12"/><circle cx="966" cy="967" r="12"/><circle cx="1447" cy="967" r="12"/>
                        </g>
                        <!-- 标注线 -->
                        <path class="dimline" d="M901 714H950M912 701V748M923 701V748M939 701V748
                            M873 760V958M861 760H899M861 827H899M861 838H899M861 904H899M861 948H899
                            M995 507V589M982 517H1020M982 528H1020M982 578H1020
                            M995 777V849M982 777H1020M982 827H1020M982 838H1020
                            M1022 487H1122M1033 474V504M1044 474V504M1122 474V504
                            M1161 507V556M1134 517H1173M1134 528H1173M1134 545H1173
                            M1034 705H1072M1044 692V723M1061 692V723
                            M1166 799V849M1140 810H1179M1140 827H1179M1140 838H1179
                            M1022 888H1127M1033 851V900M1044 851V900M1127 851V900
                            M1403 490V556M1390 490H1429M1390 528H1429M1390 545H1429
                            M1442 580H1497M1442 558V593M1464 558V593M1497 558V593
                            M1442 775H1492M1453 762V797M1464 762V797M1481 762V797
                            M1408 810V887M1395 810H1440M1395 865H1440M1395 877H1440
                            M1442 927H1539M1453 890V940M1464 890V940M1514 890V940"/>
                        <g class="slash">
                            <path d="M912 714H923H939"/><path d="M1033 487H1044H1122"/><path d="M1044 705H1061"/><path d="M1033 888H1044H1127"/>
                            <path d="M1442 580H1464H1497"/><path d="M1453 775H1464H1481"/><path d="M1453 927H1464H1514"/>
                        </g>
                        <g class="back">
                            <path d="M873 760V827V838V904V948"/><path d="M995 517V528V578"/><path d="M995 777V827V838"/><path d="M1161 517V528V545"/>
                            <path d="M1166 810V827V838"/><path d="M1403 490V528V545"/><path d="M1408 810V865V877"/>
                        </g>
                        <!-- 标注文字 -->
                        <g class="dim">
                            <text x="873" y="691">100</text><text x="931" y="693">150</text>
                            <text x="1003" y="464">100</text><text x="1069" y="464">700</text>
                            <text x="1053" y="683">150</text><text x="1079" y="865">750</text><text x="1012" y="913">100</text>
                            <text x="1417" y="607">200</text><text x="1474" y="608">300</text>
                            <text x="1415" y="752">100</text><text x="1472" y="751">150</text>
                            <text x="1402" y="903">100</text><text x="1473" y="903">450</text>
                            <text transform="translate(850 795) rotate(-90)">600</text>
                            <text transform="translate(893 848) rotate(-90)">100</text>
                            <text transform="translate(850 888) rotate(-90)">600</text>
                            <text transform="translate(850 942) rotate(-90)">400</text>
                            <text transform="translate(972 502) rotate(-90)">100</text>
                            <text transform="translate(972 569) rotate(-90)">450</text>
                            <text transform="translate(972 818) rotate(-90)">450</text>
                            <text transform="translate(972 868) rotate(-90)">100</text>
                            <text transform="translate(1190 515) rotate(-90)">100</text>
                            <text transform="translate(1189 573) rotate(-90)">150</text>
                            <text transform="translate(1194 818) rotate(-90)">150</text>
                            <text transform="translate(1195 875) rotate(-90)">100</text>
                            <text transform="translate(1378 514) rotate(-90)">350</text>
                            <text transform="translate(1379 573) rotate(-90)">150</text>
                            <text transform="translate(1527 515) rotate(-90)">100</text>
                            <text transform="translate(1528 573) rotate(-90)">150</text>
                            <text transform="translate(1385 838) rotate(-90)">500</text>
                            <text transform="translate(1385 905) rotate(-90)">100</text>
                        </g>
                        <g class="tag">
                            <text x="825" y="740">YBZ1-4</text><text x="1084" y="570">YBZ1-1</text><text x="1078" y="802">YBZ1-7</text>
                            <text x="1369" y="800">YBZ1-8</text><text x="1453" y="467">YBZ1-12</text><text x="944" y="984">YBZ1-2</text>
                            <text class="kz" x="1344" y="433">KZ1-2</text>
                        </g>
                        <g class="axisno">
                            <text x="649" y="645">G</text><text x="1529" y="485">J</text><text x="1523" y="612">H</text><text x="1433" y="211">D-47</text>
                            <text x="710" y="973">D-45</text><text x="952" y="973">D-46</text><text x="1433" y="973">D-47</text>
                        </g>
                        <!-- 坐标系 -->
                        <path d="M692 932V893h-3l5-12 5 12h-3v35h-4z" fill="#0f0"/>
                        <path d="M694 928H731v-3l12 5-12 5v-3H694z" fill="#f00"/>
                        <text class="ucs y" x="703" y="893">Y</text><text class="ucs x" x="731" y="918">X</text>
                    </g>
                </svg>
                <div class="coords">
                    <input class="cx" type="text" value="3771517" aria-label="X坐标">
                    <input class="cy" type="text" value="3930817.5" aria-label="Y坐标">
                </div>
            </div>
        </div>

        <!-- 属性编辑器 -->
        <aside class="props">
            <div class="panel-title"><span>属性编辑器</span></div>
            <table>
                <tr class="head"><th></th></tr>
                <tr><th class="cur">1</th></tr>
                <tr><th>2</th></tr>
                <tr><th>3</th></tr>
                <tr><th>4</th></tr>
                <tr><th>5</th></tr>
                <tr><th>6</th></tr>
                <tr><th>7</th></tr>
                <tr><th>8</th></tr>
                <tr><th>9</th></tr>
                <tr><th>10</th></tr>
                <tr><th>24</th></tr>
                <tr><th>39</th></tr>
            </table>
        </aside>
    </main>

    <!-- 红框批注 -->
    <div class="callout list"></div>
    <div class="callout nav"></div>
    <div class="callout draw"></div>
</body>
</html>
```
FILE: styles.css
```css
* {
    margin: 0;
    padding: 0;
    box-sizing: border-box;
}

body {
    position: relative;
    display: flex;
    flex-direction: column;
    height: 100vh;
    overflow: hidden;
    background: #f0f0f0;
    color: #000;
    font-family: "Noto Sans CJK SC", sans-serif;
    font-size: 12px;
    line-height: 16px;
    white-space: nowrap;
}

button, input, select {
    font: inherit;
    color: inherit;
    border: none;
    background: none;
}

ul {
    list-style: none;
}

.sprite {
    position: absolute;
    width: 0;
    height: 0;
}

.ico {
    width: 16px;
    height: 16px;
    flex: none;
}

.arrow {
    width: 10px;
    height: 10px;
    flex: none;
}

/* 标题与菜单 */
.titlebar {
    display: flex;
    align-items: center;
    gap: 5px;
    flex: none;
    height: 24px;
    padding-left: 2px;
    background: #fff;
    font-family: Inter, "Noto Sans CJK SC", sans-serif;
}

.menubar {
    display: flex;
    align-items: center;
    gap: 11px;
    flex: none;
    height: 26px;
    margin-left: 5px;
    padding-left: 7px;
    border-left: 1px solid #a0a0a0;
    border-bottom: 1px solid #a0a0a0;
    font-family: "Open Sans", "Noto Sans CJK SC", sans-serif;
}

/* 工具栏 */
.toolrow {
    display: flex;
    flex: none;
    height: 28px;
    border-bottom: 1px solid #a0a0a0;
    overflow: hidden;
}

.toolrow.main {
    height: 29px;
}

.toolrow.first {
    height: 27px;
}

.toolrow.right {
    justify-content: flex-end;
}

.toolbar {
    display: flex;
    align-items: center;
    gap: 1px;
    flex: none;
    padding: 0 2px;
    border-left: 1px solid #fff;
    border-right: 1px solid #a0a0a0;
}

.toolbar:last-of-type {
    border-right: none;
}

.toolbar::before {
    content: "";
    width: 2px;
    height: 22px;
    border-left: 1px solid #a0a0a0;
    border-right: 1px solid #fff;
}

.tbtn {
    display: flex;
    align-items: center;
    gap: 4px;
    flex: none;
    height: 22px;
    padding: 0 3px;
}

.toolbar.file {
    width: 164px;
    padding-left: 3px;
}

.tbtn.off {
    color: #a0a0a0;
}

.tbtn.drop::after,
.combo::after {
    content: "";
    border: 3px solid transparent;
    border-top-color: #000;
    border-bottom: none;
    margin-left: 2px;
}

.file .tbtn {
    padding: 0 3px 0 2px;
}

.tbtn.drop.tight::after {
    margin-left: -1px;
}

.tbtn.off::after {
    border-top-color: #a0a0a0;
}

.tbtn.on {
    background: #f8f8f8;
    box-shadow: inset 1px 1px #a0a0a0, inset -1px -1px #fff;
}

.sep {
    flex: none;
    width: 1px;
    height: 24px;
    margin: 0 2px;
    background: #a0a0a0;
}

.combo {
    display: flex;
    align-items: center;
    height: 20px;
    margin-right: 3px;
    padding: 0 4px 0 2px;
    background: linear-gradient(#f0f0f0, #f0f0f0) right 1px center / 10px 20px no-repeat #fff;
}

.combo select {
    flex: 1;
    min-width: 0;
    appearance: none;
    outline: none;
}

.combo.w1 {
    width: 56px;
}

.combo.w2 {
    width: 68px;
}

.combo.arc {
    width: 53px;
}

.combo.view {
    width: 61px;
    gap: 3px;
}

.combo::after {
    flex: none;
    margin: 0;
}

.more {
    margin: 0 4px 12px auto;
    font-size: 16px;
    line-height: 12px;
}

/* 主体 */
.workspace {
    display: flex;
    flex: 1;
    min-height: 0;
    padding-top: 2px;
}

.panel-title {
    display: flex;
    align-items: center;
    gap: 8px;
    flex: none;
    height: 15px;
    padding-right: 4px;
    border: 1px solid #909090;
    font-size: 13px;
    line-height: 13px;
}

.panel-title span {
    flex: 1;
}

.panel-title button,
.panel-title svg {
    display: block;
    width: 10px;
    height: 10px;
}

.panel-title.active {
    background: #0054e3;
    border-color: #0054e3;
    color: #fff;
}

/* 模块导航栏 */
.module-nav {
    display: flex;
    flex-direction: column;
    flex: none;
    width: 166px;
    border-right: 1px solid #a0a0a0;
}

.nav-section {
    flex: none;
    height: 22px;
    margin: 0 1px 0 2px;
    border-left: 1px solid #a0a0a0;
    border-bottom: 1px solid #a0a0a0;
    border-top: 1px solid #fff;
}

.nav-section.first {
    margin-top: 2px;
}

.nav-section:last-child {
    height: 23px;
    margin-bottom: 4px;
}

.nav-tools {
    flex: none;
    height: 26px;
    padding: 7px 0 0 8px;
}

.nav-tree {
    display: flex;
    flex: 1;
    min-height: 0;
    margin: 0 1px 0 3px;
    border: 1px solid #828790;
    background: #fff;
    overflow: hidden;
}

.tree {
    flex: 1;
    min-width: 0;
    padding-top: 2px;
}

.node {
    display: flex;
    align-items: center;
    height: 16px;
    padding-left: 7px;
}

.node .ico {
    margin: 0 5px 0 6px;
}

.tree ul {
    margin-left: 13px;
    border-left: 1px dotted #808080;
}

.tree > li:last-child > ul {
    border-left-color: transparent;
}

.tree ul li {
    display: flex;
    height: 16px;
    margin-left: 18px;
    border-left: 1px dotted #808080;
}

.tree ul li::before {
    content: "";
    width: 10px;
    height: 8px;
    border-bottom: 1px dotted #808080;
}

.tree ul li:last-child {
    border-left: none;
}

.tree ul li:last-child::before {
    width: 11px;
    border-left: 1px dotted #808080;
}

.tree ul li span {
    padding: 0 3px;
    line-height: 15px;
}

.tree ul li .ico,
.tree ul li::before {
    flex: none;
}

.tree .current span,
.tree .current .ico {
    background: #d9d9d9;
}

.scrollbar {
    flex: none;
    width: 16px;
    padding: 17px 0 46px 7px;
    background: #f0f0f0;
}

.scrollbar i {
    display: block;
    width: 2px;
    height: 100%;
    background: #8a8a8a;
}

/* 中间面板 */
.panels {
    display: grid;
    grid-template-rows: 439fr 386fr 49fr;
    gap: 7px;
    flex: none;
    width: 471px;
    padding-left: 3px;
    border-right: 1px solid #fff;
}

.panel {
    display: flex;
    flex-direction: column;
    min-height: 0;
}

.list-tools {
    display: flex;
    align-items: center;
    flex: none;
    height: 29px;
    padding-left: 3px;
    border-bottom: 1px solid #a0a0a0;
}

.search {
    display: flex;
    flex: none;
    height: 24px;
    margin-bottom: 1px;
    border-bottom: 1px solid #828790;
}

.search input {
    flex: 1;
    padding: 0 0 4px 4px;
    background: #fff;
}

.search input::placeholder {
    color: #808080;
}

.search button {
    width: 25px;
    padding: 3px 4px;
    background: #f8f8f8;
}

.comp-tree {
    flex: 1;
    padding-top: 1px;
    background: #fff;
    border: 1px solid #828790;
}

.leaf {
    display: flex;
    height: 16px;
    padding-left: 32px;
}

.leaf::before {
    content: "";
    width: 10px;
    height: 8px;
    border-left: 1px dotted #808080;
    border-bottom: 1px dotted #808080;
}

.leaf-box {
    display: flex;
    gap: 3px;
    padding-right: 1px;
    background: #d9d9d9;
}

.leaf-box .ico {
    height: 14px;
    margin-top: 1px;
}

.leaf-box b {
    padding: 0 1px;
    background: #2a5caa;
    color: #fff;
    font-weight: 400;
    line-height: 15px;
}

/* 图纸管理 */
.tabs {
    display: flex;
    align-items: flex-end;
    flex: none;
    height: 21px;
    padding-left: 3px;
}

.tabs button {
    height: 19px;
    padding: 0 4px 1px;
    border: 1px solid #dcdcdc;
    border-bottom: none;
}

.tabs .on {
    height: 21px;
    padding: 0 6px 1px;
    background: #f9f9f9;
}

.tab-body {
    display: flex;
    flex-direction: column;
    flex: 1;
    min-height: 0;
    padding: 3px 2px 2px 5px;
    border: 1px solid #dcdcdc;
    background: #f9f9f9;
}

.map-tools {
    display: flex;
    gap: 1px;
    flex: none;
    height: 24px;
    border-bottom: 1px solid #b0b0b0;
}

.map-tools button {
    height: 22px;
    padding: 0 4px;
    background: #f0f0f0;
    border: 1px solid #909090;
}

.map-wrap {
    flex: 1;
    min-height: 0;
    margin-top: 1px;
    padding: 1px 0;
    background: #fff;
    border: 1px solid #a0a0a0;
}

.map {
    width: 316px;
    table-layout: fixed;
    border-collapse: collapse;
}

.c-no {
    width: 31px;
}

.c-name {
    width: 117px;
}

.c-cell {
    width: 56px;
}

.map th,
.map td {
    height: 19px;
    border: 1px solid #c0c0c0;
    border-left: none;
    font-weight: 400;
    line-height: 18px;
    overflow: hidden;
}

.map th,
.props th {
    background: linear-gradient(#fdfdfd, #ececec);
    text-align: center;
}

.map thead th {
    height: 25px;
    border-top: none;
}

.map td {
    padding-left: 2px;
}

.map thead .hot {
    background: linear-gradient(#f8d79a, #f2bd58);
    color: #600060;
}

.map .cur,
.props .cur {
    background: #ffd28c;
    color: #600060;
}

.map .green td {
    background: #008000;
}

.fold {
    display: inline-block;
    width: 12px;
    height: 12px;
    margin: 0 5px 0 1px;
    border: 1px solid #b0b0b0;
    background: linear-gradient(#000, #000) center / 6px 1px no-repeat #f8f8f8;
    vertical-align: -2px;
}

.branch {
    display: inline-block;
    width: 16px;
    height: 18px;
    margin: 0 5px 0 6px;
    background:
        linear-gradient(#b8b8b8, #b8b8b8) left top / 1px 100% no-repeat,
        linear-gradient(#b8b8b8, #b8b8b8) left center / 16px 1px no-repeat;
    vertical-align: top;
}

.branch.end {
    background-size: 1px 50%, 16px 1px;
}

.map .green .editing {
    padding: 0;
    background: #68b468;
    outline: 2px solid #000;
    outline-offset: -1px;
}

.editing div {
    display: flex;
    align-items: center;
    justify-content: space-between;
    padding: 0 2px;
    line-height: 16px;
}

.editing button {
    display: flex;
    align-items: center;
    justify-content: center;
    width: 15px;
    height: 15px;
    border-radius: 3px;
    background: #fff;
}

/* CAD图层 */
.layers {
    flex: 1;
    padding: 2px 0 0 9px;
    background: #fff;
    border: 1px solid #828790;
    border-bottom: none;
}

.layers label {
    display: flex;
    align-items: center;
    height: 14px;
}

.layers input {
    width: 12px;
    height: 12px;
    margin: 0 3px 0 8px;
    accent-color: #005fb8;
}

/* 绘图区 */
.drawing {
    display: flex;
    flex-direction: column;
    flex: 1;
    min-width: 0;
    padding-left: 2px;
}

.canvas {
    position: relative;
    flex: 1;
    min-height: 0;
    background: #000;
    overflow: hidden;
}

.cad {
    display: block;
    width: 100%;
    height: 100%;
}

.solid path {
    fill: #bf00ff;
    stroke: #f00;
    shape-rendering: crispEdges;
}

.solid .kz {
    stroke: #ff0;
}

.ln {
    fill: none;
    shape-rendering: crispEdges;
}

.ln.axis {
    stroke: #904a60;
}

.ln.red {
    stroke: #f00;
}

.ln.green {
    stroke: #40ff00;
}

.ln.yellow {
    stroke: #ff0;
}

.ln.cyan {
    stroke: #00d8d8;
    stroke-width: 2;
}

.bubble {
    fill: none;
    stroke: #008000;
}

.dimline {
    fill: none;
    stroke: #fff;
    stroke-width: 2;
    shape-rendering: crispEdges;
}

.slash path {
    fill: none;
    marker: url(#slash);
}

.back path {
    fill: none;
    marker: url(#back);
}

.dim {
    fill: #fff;
    font: 300 22px Roboto, sans-serif;
}

.tag {
    fill: #f00;
    font: 200 23px "DejaVu Sans", sans-serif;
}

.tag .kz {
    fill: #ff0;
}

.axisno {
    fill: #fff;
    font: 200 18px "DejaVu Sans", sans-serif;
}

.ucs {
    font: 200 13px "DejaVu Sans", sans-serif;
}

.ucs.x {
    fill: #f00;
}

.ucs.y {
    fill: #0f0;
}

.coords {
    position: absolute;
    left: 533px;
    top: 734px;
    display: flex;
    gap: 4px;
    font-family: "Liberation Mono", monospace;
    font-size: 11px;
}

.coords input {
    height: 18px;
    padding-left: 1px;
    border: 1px solid #707070;
}

.cx {
    width: 61px;
    background: linear-gradient(#0078d7, #0078d7) 1px center / 46px 14px no-repeat #fff;
    color: #fff;
}

.cy {
    width: 73px;
    background: #17135c;
    color: #d0d0e8;
}

/* 属性 */
.props {
    flex: none;
    width: 14px;
    margin-left: 2px;
    background: #fff;
    border-left: 1px solid #a0a0a0;
    overflow: hidden;
}

.props .panel-title {
    background: #f0f0f0;
}

.props table {
    width: 22px;
    border-collapse: collapse;
}

.props th {
    height: 19px;
    border: 1px solid #c0c0c0;
    font-weight: 400;
    line-height: 17px;
}

.props .head th {
    height: 24px;
}

/* 批注框 */
.callout {
    position: absolute;
    border: 3px solid #ff2010;
    border-radius: 3px;
    pointer-events: none;
}

.callout.list {
    left: 163px;
    top: 125px;
    width: 209px;
    height: 139px;
}

.callout.nav {
    left: 5px;
    top: 748px;
    width: 174px;
    height: 126px;
}

.callout.draw {
    left: 771px;
    top: 643px;
    width: 221px;
    height: 305px;
}
```
